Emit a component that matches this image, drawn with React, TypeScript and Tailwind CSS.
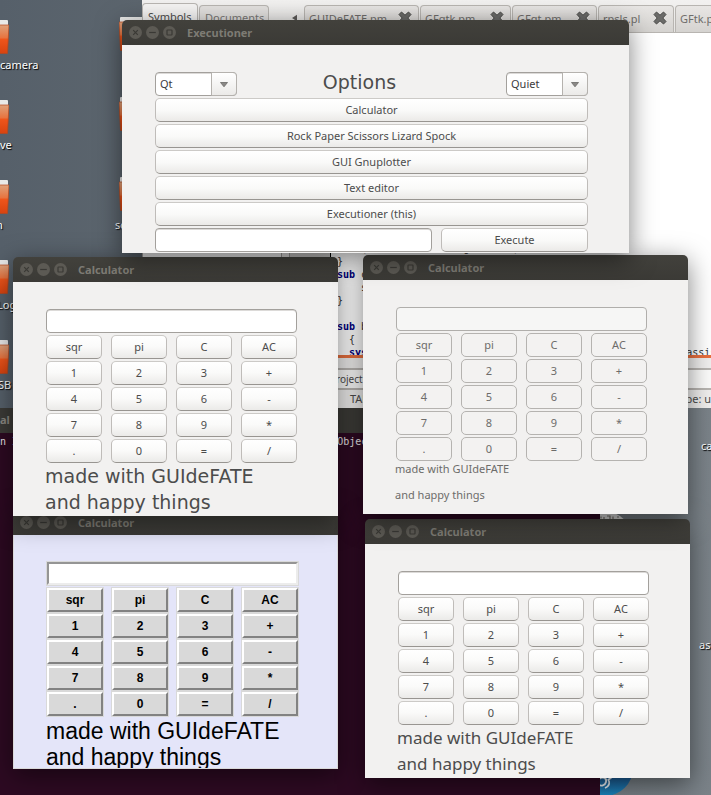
import React from "react";

const UI = "font-['Noto_Sans','Open_Sans',sans-serif]";
const MONO = "font-['DejaVu_Sans_Mono','Liberation_Mono',monospace]";

const KEYS = [
  "sqr", "pi", "C", "AC",
  "1", "2", "3", "+",
  "4", "5", "6", "-",
  "7", "8", "9", "*",
  ".", "0", "=", "/",
];

const TOOLS = [
  "Calculator",
  "Rock Paper Scissors Lizard Spock",
  "GUI Gnuplotter",
  "Text editor",
  "Executioner (this)",
];

const GTK_BUTTON =
  "h-6 rounded-[5px] border border-[#bfbcb9] border-t-[#cccac7] border-b-[#989591] bg-linear-to-b from-white via-[#fafaf9] to-[#ebeae8] text-[11px] leading-4 text-[#4c4c4c]";
const GTK_FIELD =
  "h-6 rounded-[4px] border border-[#a3a09c] bg-white px-1 text-[11px] text-[#3c3c3c] outline-none shadow-[inset_0_1px_0_#dcdad8]";

function TitleBar({ title }: { title: string }) {
  return (
    <header className="flex h-[25px] items-center gap-1 rounded-t-[5px] bg-linear-to-b from-[#42413c] to-[#3b3a36] pl-[7px]">
      {["close", "minimise", "maximise"].map((name) => (
        <button key={name} aria-label={name} className="size-[13px] rounded-full bg-[#5c5a54]">
          <svg viewBox="0 0 13 13" className="size-[13px]" fill="none" stroke="#3a3935" strokeWidth="1.2">
            {name === "close" && <path d="M4.2 4.2l4.6 4.6M8.8 4.2l-4.6 4.6" />}
            {name === "minimise" && <path d="M3.2 6.5h6.6" />}
            {name === "maximise" && <rect x="4" y="4" width="5" height="5" rx="0.5" />}
          </svg>
        </button>
      ))}
      <h2 className="ml-[7px] text-[11px] font-bold leading-4 text-[#7d7b74]">{title}</h2>
    </header>
  );
}

type WindowProps = {
  title: string;
  place: string;
  body?: string;
  children: React.ReactNode;
};

function Window({ title, place, body = "bg-[#f2f1f0]", children }: WindowProps) {
  return (
    <section className={`absolute rounded-t-[5px] shadow-[0_6px_26px_rgba(0,0,0,0.5)] ${UI} ${place}`}>
      <TitleBar title={title} />
      <div className={body}>{children}</div>
    </section>
  );
}

type CalculatorProps = {
  place: string;
  body?: string;
  button?: string;
  field?: string;
  caption: string;
};

function Calculator({
  place,
  body = "h-[234px] bg-[#f2f1f0] pl-[33px] pr-[41px] pt-[27px]",
  button = GTK_BUTTON,
  field = GTK_FIELD,
  caption,
}: CalculatorProps) {
  return (
    <Window title="Calculator" place={place} body={body}>
      <input aria-label="Display" className={`block w-full ${field}`} />
      <div className="mt-0.5 grid grid-cols-4 gap-x-[9px] gap-y-0.5">
        {KEYS.map((key) => (
          <button key={key} className={button}>
            {key}
          </button>
        ))}
      </div>
      <div className={`-ml-px whitespace-nowrap ${caption}`}>
        <p>made with GUIdeFATE</p>
        <p>and happy things</p>
      </div>
    </Window>
  );
}

function Combo({ value, label }: { value: string; label: string }) {
  return (
    <div className="relative h-6 w-[82px]">
      <select
        aria-label={label}
        className={`block w-full appearance-none py-0 leading-4 ${GTK_FIELD}`}
      >
        <option>{value}</option>
      </select>
      <span className="pointer-events-none absolute inset-y-0 right-0 flex w-[26px] items-center justify-center rounded-r-[4px] border border-[#b5b2ae] bg-linear-to-b from-white to-[#ebeae8]">
        <svg viewBox="0 0 8 5" className="h-[5px] w-2">
          <path d="M0.5 0.5h7L4 4.8z" fill="#8a8886" stroke="#6a6866" strokeWidth="0.8" />
        </svg>
      </span>
    </div>
  );
}

function Executioner() {
  return (
    <Window
      title="Executioner"
      place="left-[122px] top-5 w-[507px]"
      body="flex flex-col gap-0.5 bg-[#f2f1f0] pl-[33px] pr-[41px] pt-[27px] pb-px"
    >
      <div className="flex h-6 items-center justify-between">
        <Combo value="Qt" label="Toolkit" />
        <h1 className="pb-1 pr-6 font-['DejaVu_Sans',sans-serif] text-[19px] leading-5 text-[#4c4c4c]">Options</h1>
        <Combo value="Quiet" label="Verbosity" />
      </div>
      {TOOLS.map((tool) => (
        <button key={tool} className={GTK_BUTTON}>
          {tool}
        </button>
      ))}
      <div className="flex gap-[9px]">
        <input aria-label="Command" className={`min-w-0 flex-1 ${GTK_FIELD}`} />
        <button className={`w-[147px] ${GTK_BUTTON}`}>Execute</button>
      </div>
    </Window>
  );
}

function CloseCross() {
  return (
    <svg viewBox="0 0 14 14" className="size-[14px] shrink-0">
      <path
        d="M3.5 1L7 4.2 10.500 1 13 3.500 9.800 7 13 10.500 10.500 13 7 9.800 3.500 13 1 10.500 4.200 7 1 3.500z"
        fill="#6b6b69"
        stroke="#4a4a48"
        strokeWidth="1"
        strokeLinejoin="round"
      />
    </svg>
  );
}

const FILES = [
  { name: "GUIDeFATE.pm", width: "w-[115px]" },
  { name: "GFgtk.pm", width: "w-[91px]" },
  { name: "GFqt.pm", width: "w-[85px]" },
  { name: "rpsls.pl", width: "w-[76px]" },
  { name: "GFtk.pm", width: "w-[90px]" },
];

const CODE: { word?: string; rest: string }[] = [
  { rest: "    (        ,       g       (        ," },
  { rest: "}" },
  { word: "sub", rest: " c" },
  { rest: "    s" },
  { rest: "}" },
  { rest: " " },
  { word: "sub", rest: " b" },
  { rest: "  {" },
  { word: "  sys", rest: " ".repeat(53) + "assist" },
];

function Editor() {
  return (
    <section
      className={`absolute left-[142px] right-0 top-0 flex h-[408px] flex-col overflow-hidden bg-[#f0efee] text-[#4c4c4c] ${UI}`}
    >
      <div className="flex h-[33px] shrink-0 items-end border-b border-[#b8b5b1] bg-linear-to-b from-[#f2f1f0] to-[#e6e5e3] text-[11px] leading-4">
        <span className="h-[29px] w-14 shrink-0 rounded-t-[4px] border border-b-0 border-[#b8b5b1] bg-[#f5f4f3] pl-[5px] pt-[5px]">
          Symbols
        </span>
        <span className="ml-px h-[27px] w-[70px] shrink-0 rounded-t-[4px] border border-b-0 border-[#b8b5b1] bg-[#e3e1df] pl-[5px] pt-1 text-[#7b7977]">
          Documents
        </span>
        <svg viewBox="0 0 6 8" className="mb-[10px] ml-[23px] mr-[7px] h-2 w-[5px] shrink-0">
          <path d="M6 0v8L0 4z" fill="#5e5c5a" />
        </svg>
        {FILES.map((file) => (
          <span
            key={file.name}
            className={`mr-px flex h-[27px] shrink-0 items-start justify-between rounded-t-[4px] border border-b-0 border-[#b8b5b1] bg-linear-to-b from-[#e8e6e4] to-[#d5d3d0] pl-1 pr-1.5 pt-[5px] text-[#6f6d6b] ${file.width}`}
          >
            {file.name}
            <CloseCross />
          </span>
        ))}
      </div>
      <div className="flex min-h-0 flex-1 items-stretch">
        <div className="w-[140px] shrink-0 border-x border-[#a8a6a3] bg-white" />
        <div className="w-[7px] shrink-0" />
        <div className="w-[41px] shrink-0 border-l border-[#a8a6a3] bg-[#d4d3d1]" />
        <div className="flex flex-1 items-end overflow-hidden border-l border-black bg-white pl-1.5">
          <pre className={`-mb-1 text-[10px] leading-[13px] text-[#333] ${MONO}`}>
            {CODE.map((line, i) => (
              <div key={i}>
                {line.word && <b className="text-[#00007f]">{line.word}</b>}
                {line.rest}
              </div>
            ))}
          </pre>
        </div>
      </div>
      <div className="h-[3px] shrink-0 bg-[#e9703f]" />
      <div className="flex h-[50px] shrink-0 flex-col pt-2.5">
        <div className="flex h-[22px] shrink-0 items-center border-y-2 border-[#b8b5b1] bg-[#fbfbfa] pl-[188px] text-[10px] leading-4">
          Project
        </div>
        <div className="flex flex-1 items-center justify-between pl-[208px] text-[11px] leading-4">
          <span>TAB</span>
          <span>pe: u</span>
        </div>
      </div>
    </section>
  );
}

function Terminal() {
  return (
    <section className="absolute bottom-0 left-0 top-[408px] w-[600px] bg-[#2d0a22]">
      <header className={`flex h-[25px] items-center bg-[#3c3b37] text-[11px] font-bold text-[#8a8881] ${UI}`}>al</header>
      <pre className={`pt-0.5 text-[10px] leading-[13px] text-[#e8e4e6] ${MONO}`}>
        {"n I" + " ".repeat(53) + "Object"}
      </pre>
    </section>
  );
}

function Folder({ place }: { place: string }) {
  return (
    <svg viewBox="0 0 48 34" className={`absolute h-[34px] w-12 ${place}`}>
      <defs>
        <linearGradient id="folder" x1="0" y1="0" x2="0" y2="1">
          <stop offset="0" stopColor="#dfa27c" />
          <stop offset="0.45" stopColor="#e8743f" />
          <stop offset="0.5" stopColor="#ee551b" />
          <stop offset="1" stopColor="#d8430f" />
        </linearGradient>
      </defs>
      <rect x="1" y="0" width="46" height="8" rx="1" fill="#e9e9e8" />
      <path d="M0 5h48l-1.500 28.500h-45z" fill="url(#folder)" stroke="#b8471c" strokeWidth="0.7" />
    </svg>
  );
}

const LEFT_ICONS = [
  { label: "camera", folder: "-left-[39px] top-5", text: "left-0 top-[57px]" },
  { label: "ve", folder: "-left-[39px] top-[100px]", text: "left-0 top-[137px]" },
  { label: "n", folder: "-left-[39px] top-[180px]", text: "-left-[4px] top-[217px]" },
  { label: "Log", folder: "-left-[39px] top-[260px]", text: "-left-[3px] top-[297px]" },
  { label: "SB", folder: "-left-[39px] top-[340px]", text: "-left-[2px] top-[377px]" },
  { label: "", folder: "left-[119px] top-[17px]", text: "left-0 top-0" },
  { label: "", folder: "left-[119px] top-[97px]", text: "left-0 top-0" },
  { label: "sc", folder: "left-[119px] top-[177px]", text: "left-[115px] top-[217px]" },
];

const LABEL =
  "absolute text-[11px] leading-4 text-white [text-shadow:1px_1px_1px_#000]";

function Desktop() {
  return (
    <div className={`absolute inset-0 bg-linear-to-r from-[#56606a] via-[#656d73] to-[#7b8389] ${UI}`}>
      {LEFT_ICONS.map((icon) => (
        <React.Fragment key={icon.folder}>
          <Folder place={icon.folder} />
          {icon.label && <span className={`${LABEL} ${icon.text}`}>{icon.label}</span>}
        </React.Fragment>
      ))}
      <span className={`${LABEL} left-[701px] top-[438px]`}>ca</span>
      <span className={`${LABEL} left-[699px] top-[637px]`}>as</span>
      <svg viewBox="0 0 48 48" className="absolute left-[586px] top-[511px] size-12">
        <circle cx="21" cy="24" r="23" fill="#dededd" />
        <path d="M15 5.500v2M18 6v2M21 5h3v3M27 5.500v2.500M31 6h2" stroke="#77756f" strokeWidth="1.200" fill="none" />
      </svg>
      <svg viewBox="0 0 60 60" className="absolute left-[576px] top-[738px] size-[60px]">
        <defs>
          <linearGradient id="disc" x1="0" y1="0.6" x2="0" y2="1">
            <stop offset="0" stopColor="#1c4f86" />
            <stop offset="1" stopColor="#1a86bd" />
          </linearGradient>
        </defs>
        <circle cx="29" cy="30" r="28" fill="url(#disc)" />
        <path d="M23 41c4-3 8-1 7 3s-5 4-7 3M32 41c2 3 2 7-3 9M32 42l4-3" stroke="#e8eef2" strokeWidth="1.800" fill="none" />
      </svg>
    </div>
  );
}

const TK_BUTTON =
  "h-6 border-2 border-b-[#828282] border-l-white border-r-[#828282] border-t-white bg-[#d9d9d9] font-['Liberation_Sans',Arial,sans-serif] text-xs font-bold leading-4 text-black shadow-[0_0_0_1px_#d9d9d9]";
const TK_FIELD =
  "h-[23px] mb-[3px] border-2 border-b-[#ececec] border-l-[#959595] border-r-[#ececec] border-t-[#959595] bg-white px-1 text-xs outline-none shadow-[0_0_0_1px_#d9d9d9]";
const FADED_BUTTON =
  "h-6 rounded-[5px] border border-[#b5b3b0] bg-[#f3f2f1] text-[11px] leading-4 text-[#6d6c6a]";
const FADED_FIELD =
  "h-6 rounded-[4px] border border-[#b0aeab] bg-[#f6f6f5] px-1 text-[11px] outline-none";

export default function App() {
  return (
    <main className="relative h-screen w-full overflow-hidden">
      <Desktop />
      <Terminal />
      <Editor />
      <Calculator
        place="left-[13px] top-[510px] w-[325px]"
        body="h-[234px] overflow-hidden border-x border-b border-[#d9d9d9] bg-[#e4e5f9] pl-[33px] pr-[39px] pt-[27px]"
        button={TK_BUTTON}
        field={TK_FIELD}
        caption="pt-0.5 font-['Liberation_Sans',Arial,sans-serif] text-[23px] leading-[26px] text-black"
      />
      <Calculator
        place="left-[13px] top-[257px] w-[325px]"
        caption="font-['DejaVu_Sans',sans-serif] text-[19px] leading-[26px] text-[#4c4c4c]"
      />
      <Calculator
        place="left-[365px] top-[519px] w-[325px]"
        caption="text-[17px] leading-[26px] text-[#4c4c4c]"
      />
      <Calculator
        place="left-[363px] top-[255px] w-[325px]"
        button={FADED_BUTTON}
        field={FADED_FIELD}
        caption="flex flex-col gap-2.5 text-[11px] leading-4 text-[#6d6c6a]"
      />
      <Executioner />
    </main>
  );
}
